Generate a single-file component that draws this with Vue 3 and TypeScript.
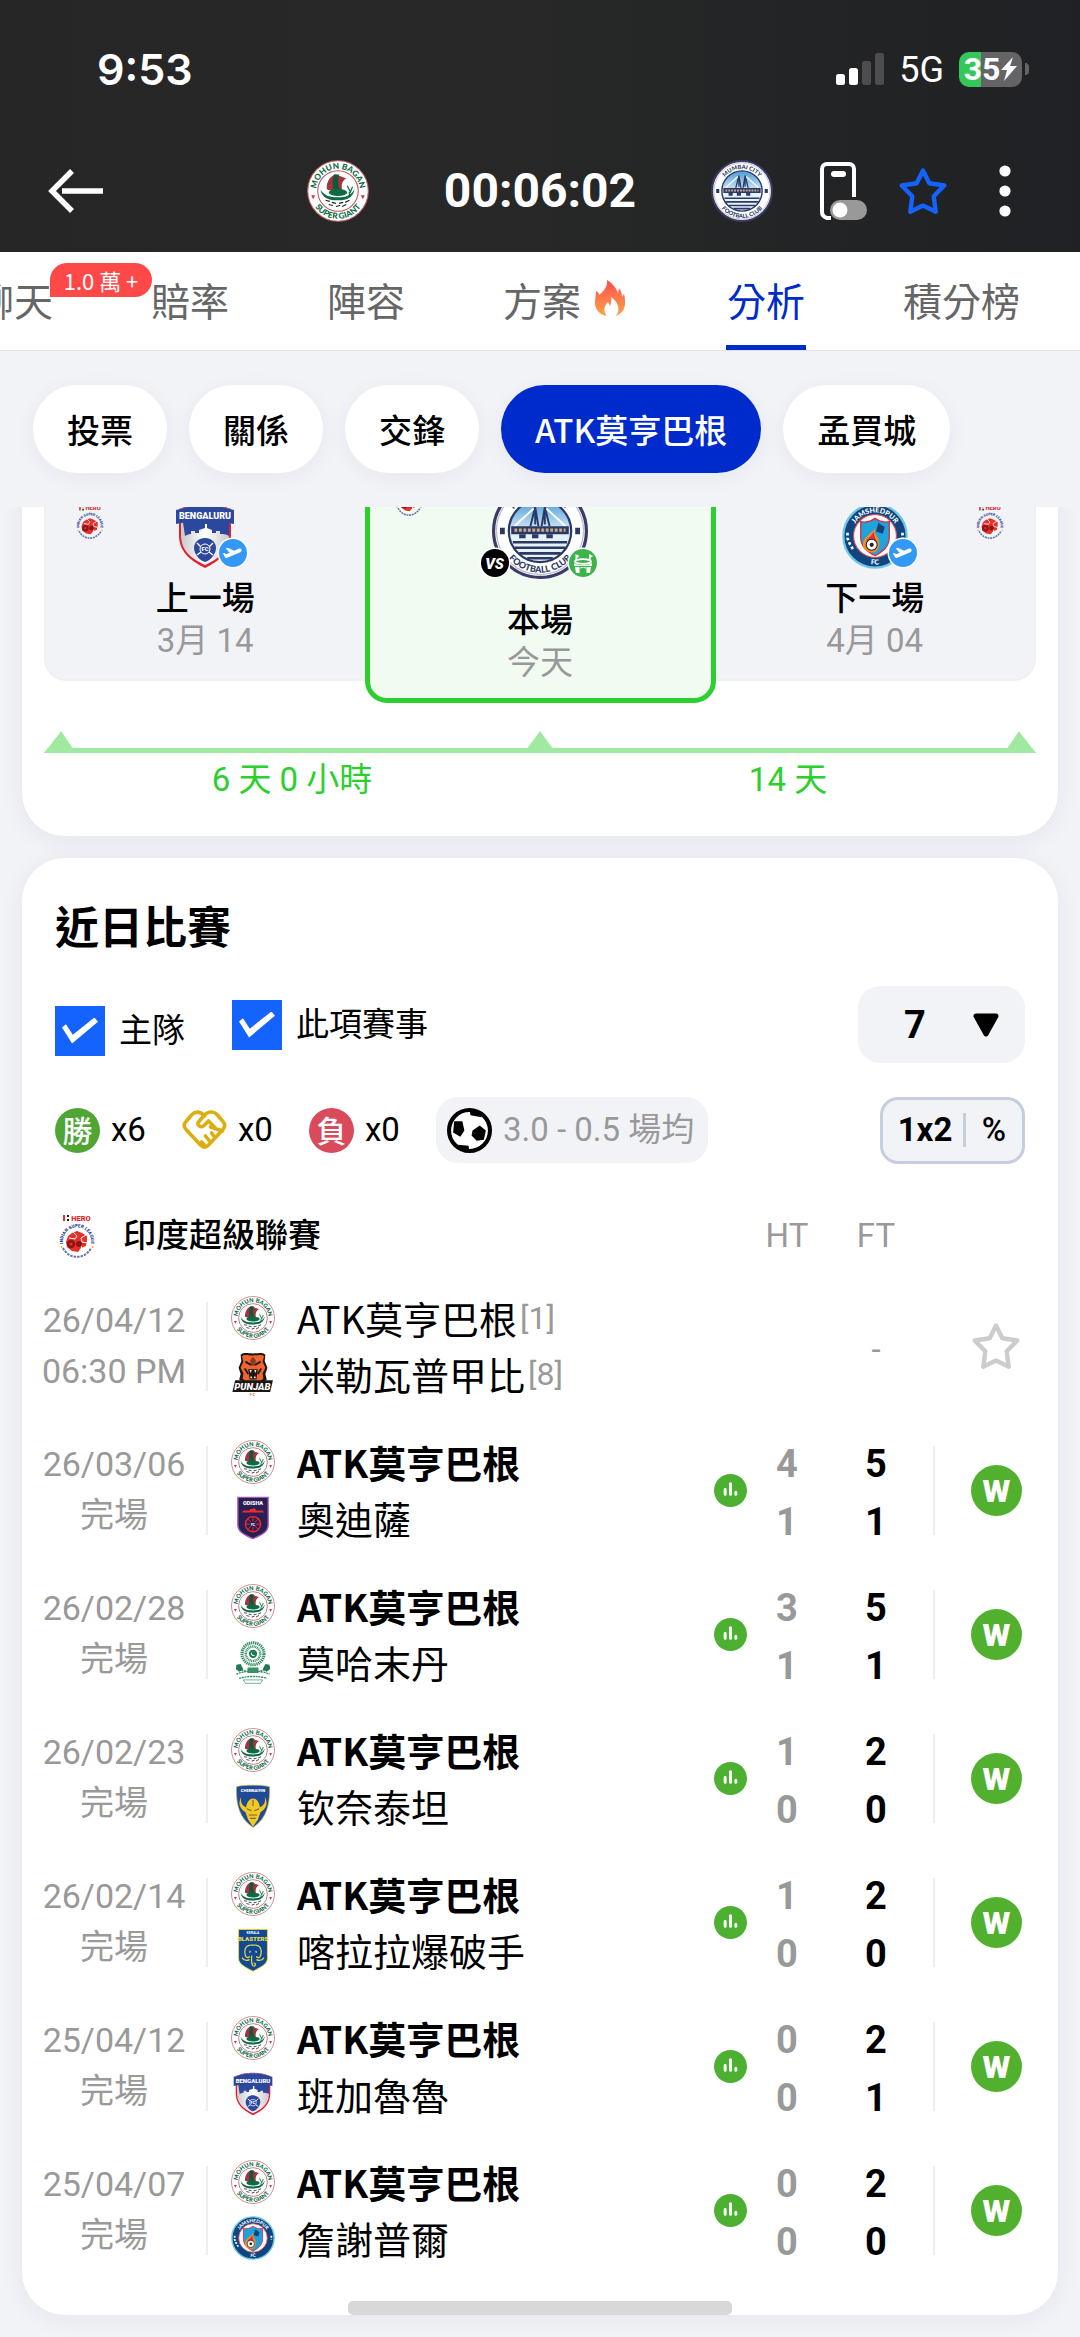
<script setup lang="ts">
import { ref } from 'vue'

interface Team {
  name: string
  logo: string
  rank?: number
}

interface Match {
  date: string
  status: string
  home: Team
  away: Team
  ht?: [number, number]
  ft?: [number, number]
}

interface Crest {
  box: string
  art: string
}

const chips = ['投票', '關係', '交鋒', 'ATK莫亨巴根', '孟買城']
const activeChip = ref('ATK莫亨巴根')
const homeOnly = ref(true)
const sameLeague = ref(true)
const count = ref('7')

const atk: Team = { name: 'ATK莫亨巴根', logo: 'mohun' }

const matches: Match[] = [
  {
    date: '26/04/12',
    status: '06:30 PM',
    home: { ...atk, rank: 1 },
    away: { name: '米勒瓦普甲比', logo: 'punjab', rank: 8 },
  },
  { date: '26/03/06', status: '完場', home: atk, away: { name: '奧迪薩', logo: 'odisha' }, ht: [4, 1], ft: [5, 1] },
  { date: '26/02/28', status: '完場', home: atk, away: { name: '莫哈末丹', logo: 'mohammedan' }, ht: [3, 1], ft: [5, 1] },
  { date: '26/02/23', status: '完場', home: atk, away: { name: '钦奈泰坦', logo: 'chennaiyin' }, ht: [1, 0], ft: [2, 0] },
  { date: '26/02/14', status: '完場', home: atk, away: { name: '喀拉拉爆破手', logo: 'kerala' }, ht: [1, 0], ft: [2, 0] },
  { date: '25/04/12', status: '完場', home: atk, away: { name: '班加魯魯', logo: 'bengaluru' }, ht: [0, 0], ft: [2, 1] },
  { date: '25/04/07', status: '完場', home: atk, away: { name: '詹謝普爾', logo: 'jamshedpur' }, ht: [0, 0], ft: [2, 0] },
]

/* Club and league crests, keyed by logo name */
const crests: Record<string, Crest> = {
  mohun: {
    box: '0 0 60 60',
    art: `
      <circle cx="30" cy="30" r="29.3" fill="#fff" stroke="#c0646a" stroke-width="1" />
      <circle cx="30" cy="30" r="19.6" fill="#fff" stroke="#b8505a" stroke-width="1" />
      <g fill="#0b6b45" font-family="Lato, sans-serif" font-weight="900" font-size="8" text-anchor="middle">
        <text><textPath href="#arcTop" startOffset="50%">MOHUN BAGAN</textPath></text>
        <text><textPath href="#arcBottom" startOffset="50%">SUPER GIANT</textPath></text>
      </g>
      <path d="M4 34h4l-2 4zM52 34h4l-2 4z" fill="#c73a5e" />
      <path d="M19 28c0-8 4-13 9-14l10 4c-4 2-5 6-4 11l-10 1-3-1z" fill="#a3333c" />
      <path d="M26 14h5c-1 5-2 10 1 15l-6 1c-2-6-1-11 0-16z" fill="#0b5b3b" />
      <path d="M13 29c5 6 9 7 17 7s12-1 16-8c-1 8-7 11-16 11s-15-2-17-10z" fill="#0b6b45" />
      <ellipse cx="30" cy="31.5" rx="9" ry="3.4" fill="#0b6b45" />
      <path d="M39 25l3 6 2-5M41 31v4" stroke="#0b6b45" stroke-width="1.2" fill="none" />
      <path d="M18 39l4 1M24 41l4 1M31 42l4-1M37 41l4-2M21 43l4 1M28 45l4-1M34 45l4-2" stroke="#222" stroke-width="1.1" />`,
  },
  mumbai: {
    box: '0 0 60 60',
    art: `
      <circle cx="30" cy="30" r="29" fill="#fff" stroke="#3d3a66" stroke-width="2" />
      <circle cx="30" cy="30" r="27.2" fill="none" stroke="#b9bfd3" stroke-width="0.8" />
      <g fill="#2c3963" font-family="Lato, sans-serif" font-weight="900" font-size="5.6" text-anchor="middle">
        <text><textPath href="#arcTop" startOffset="50%">MUMBAI CITY</textPath></text>
        <text><textPath href="#arcBottomTight" startOffset="50%">FOOTBALL CLUB</textPath></text>
      </g>
      <path d="M5 28h3v4H5zM52 28h3v4h-3z" fill="#2c3963" />
      <circle cx="30" cy="30" r="19.5" fill="url(#skyFill)" stroke="#2c3963" stroke-width="1.4" />
      <path d="M27 15l-3 12M27 15l2 12M33 15l-2 12M33 15l3 12M27 15v11M33 15v11" stroke="#2c3963" stroke-width="1.2" />
      <path d="M26 16L14 27M34 16l12 11" stroke="#fff" stroke-width="1.2" />
      <path d="M12 27h36v5H12z" fill="#2c3963" />
      <path d="M14 29.5h32" stroke="#c8a98c" stroke-width="2" stroke-dasharray="1.8 1" />
      <path d="M17 32h4v2.5h-4zM25 32h4v2.5h-4zM34 32h4v2.5h-4z" fill="#2c3963" />
      <path d="M13 37h34M14 40.5h32M17 44h26M22 47h16" stroke="#2c3963" stroke-width="1.6" />`,
  },
  bengaluru: {
    box: '0 0 60 66',
    art: `
      <path d="M4 6C14 2 20 1 30 1s16 1 26 5v26c0 16-10 25-26 33C14 57 4 48 4 32z" fill="#e2202d" />
      <path d="M6 6c9-3 14-4 24-4s15 1 24 4v26c0 15-9 23-24 30C15 55 6 47 6 32z" fill="url(#silverFill)" />
      <path d="M6 6c9-3 14-4 24-4s15 1 24 4v27c-3-2-6-2-9-2v-3h-4v2h-4v-3l-5-2v-4h-2v4l-6 2v3h-4v-2h-4v3c-3 0-4 1-6 2z" fill="#2b479e" />
      <path d="M1 7c18-4 40-4 58 0v14c-18-4-40-4-58 0z" fill="#2b479e" />
      <path d="M30 35c6 0 11 4 11 10s-6 13-11 14c-5-1-11-8-11-14s5-10 11-10z" fill="#2b479e" />
      <path d="M22 40l4 4M38 40l-4 4M22 52l4-3M38 52l-4-3" stroke="#fff" stroke-width="1.4" />
      <circle cx="30" cy="46" r="5" fill="#2b479e" stroke="#fff" stroke-width="1" />
      <g fill="#fff" font-family="Roboto, sans-serif" font-weight="900" text-anchor="middle">
        <text x="30" y="16" font-size="9">BENGALURU</text>
        <text x="30" y="48" font-size="6">FC</text>
      </g>`,
  },
  jamshedpur: {
    box: '0 0 60 60',
    art: `
      <circle cx="30" cy="30" r="28.8" fill="#10457f" stroke="#6cc7ea" stroke-width="2" />
      <circle cx="30" cy="30" r="19.5" fill="#f6f7fa" stroke="#d8505a" stroke-width="1" />
      <path d="M17 17c5 1 9 0 13-3 4 3 8 4 13 3v14c0 9-6 13-13 17-7-4-13-8-13-17z" fill="#1da4dd" stroke="#d8303d" stroke-width="1.2" />
      <path d="M33 18l6 4-2 6-6-2z" fill="#173f7a" />
      <path d="M19 38c0-6 6-9 11-15-1 6 4 8 4 14 0 5-3 8-7 8s-8-3-8-7z" fill="#f28c28" />
      <path d="M22 34c2-2 5-4 7-8 0 4 1 5 2 8z" fill="#d8303d" />
      <circle cx="27" cy="38" r="5" fill="#fff" stroke="#222" stroke-width="1" />
      <circle cx="27" cy="38" r="1.9" fill="#222" />
      <g fill="#fff" font-family="Lato, sans-serif" font-weight="900" font-size="6.4" text-anchor="middle">
        <text><textPath href="#arcTop" startOffset="50%">JAMSHEDPUR</textPath></text>
        <text><textPath href="#arcBottomTight" startOffset="50%">FC</textPath></text>
      </g>
      <path d="M5 27v5l2 5 3 5M55 27v5" fill="none" stroke="#fff" stroke-width="2.4" stroke-dasharray="2.5 2" />`,
  },
  punjab: {
    box: '0 0 60 64',
    art: `
      <path d="M12 4c5-4 10-2 18-2s13-2 18 2l-1 9 4 10-3 9 2 8-10 8H20l-10-8 2-8-3-9 4-10z" fill="#1c1715" />
      <path d="M14 6c4-3 8-1 16-1s12-2 16 1l-2 8 4 9-4 8 1 8-7 5-8 3-8-3-7-5 1-8-4-8 4-9z" fill="#f0642d" />
      <path d="M19 14l8 5M41 14l-8 5M18 24l5 8M42 24l-5 8" stroke="#1c1715" stroke-width="2.6" />
      <path d="M26 12l4-5 4 5-1 8h-6z" fill="#1c1715" opacity="0.5" />
      <path d="M23 25h14l-2 15H25z" fill="#1c1715" />
      <path d="M25 26l2 5 1-5zM32 26l1 5 2-5zM26 38l1-4 2 4zM31 38l2-4 1 4z" fill="#fff" />
      <path d="M4 41h55l-4 17H0z" fill="#1c1715" />
      <text x="29" y="55" fill="#fff" font-family="Roboto, sans-serif" font-weight="900" font-style="italic" font-size="14" text-anchor="middle">PUNJAB</text>
      <text x="29" y="64" fill="#f0642d" font-family="Roboto, sans-serif" font-weight="700" font-size="5" text-anchor="middle">F C</text>`,
  },
  odisha: {
    box: '0 0 60 64',
    art: `
      <path d="M8 2h44v40c0 10-10 15-22 20C18 57 8 52 8 42z" fill="#2a1f55" stroke="#a456b4" stroke-width="2" />
      <text x="30" y="13" fill="#fff" font-family="Roboto, sans-serif" font-weight="900" font-size="8" text-anchor="middle">ODISHA</text>
      <path d="M14 24l2-3h9l1-2h4l1-2 2 2 2 2h9l2 3z" fill="#f0282c" />
      <g fill="none" stroke="#f0282c" stroke-width="2">
        <circle cx="30" cy="41" r="11" />
        <path d="M30 30v22M19 41h22M22.200 33.200l15.600 15.600M37.800 33.200L22.200 48.800" stroke-width="1.300" />
      </g>
      <circle cx="30" cy="41" r="4" fill="#2a1f55" />
      <text x="30" y="43" fill="#fff" font-family="Roboto, sans-serif" font-weight="700" font-size="5" text-anchor="middle">FC</text>`,
  },
  mohammedan: {
    box: '0 0 60 64',
    art: `
      <g fill="none" stroke="#3b8f68">
        <circle cx="30" cy="20" r="16" stroke-width="4.500" stroke-dasharray="2 1" />
        <circle cx="30" cy="20" r="10.500" stroke-width="3.500" stroke-dasharray="1.500 1" />
        <path d="M7 38c4 6 12 8 23 8s19-2 23-8M6 50c8-6 40-6 48 0M10 56c10-4 30-4 40 0" stroke-width="2" stroke-dasharray="3 1" />
        <path d="M16 58h28l-3 5H19z" stroke-width="1" />
      </g>
      <circle cx="30" cy="20" r="6" fill="#1f7a50" />
      <path d="M28 17a3.500 3.500 0 1 0 5 5 4 4 0 0 1-5-5z" fill="#fff" />
      <path d="M6 36l6-1 4 8-6 3-5-4zM54 36l-6-1-4 8 6 3 5-4z" fill="#1f7a50" />
      <path d="M22 40h16v8H22z" fill="#3b8f68" />`,
  },
  chennaiyin: {
    box: '0 0 60 64',
    art: `
      <path d="M6 4c8-3 40-3 48 0 1 22-3 46-24 59C9 50 5 26 6 4z" fill="#1f4b96" stroke="#c9b04a" stroke-width="1" />
      <text x="30" y="12" fill="#fff" font-family="Roboto, sans-serif" font-weight="900" font-size="6" text-anchor="middle">CHENNAIYIN</text>
      <path d="M13 19c-2 8 2 13 7 15 1-8 5-13 10-13s9 5 10 13c5-2 9-7 7-15 6 10 1 18-6 22l-4 11-7 10-7-10-4-11c-7-4-12-12-6-22z" fill="#f0c929" />
      <path d="M21 36l7 3M39 36l-7 3M24 45h12M26 50h8M30 23v9" stroke="#7d6414" stroke-width="1.600" />`,
  },
  kerala: {
    box: '0 0 60 64',
    art: `
      <path d="M9 2h42v42c0 9-10 13-21 19C19 57 9 53 9 44z" fill="#10489a" stroke="#e8d92f" stroke-width="1.400" />
      <text x="30" y="8" fill="#fff" font-family="Roboto, sans-serif" font-weight="700" font-size="5" text-anchor="middle">KERALA</text>
      <text x="30" y="19" fill="#f0e034" font-family="Roboto, sans-serif" font-weight="900" font-size="9" text-anchor="middle">BLASTERS</text>
      <g fill="none" stroke="#e8d92f" stroke-width="1.800">
        <path d="M26 25c-8 1-9 9-7 15 1 4 5 4 6 1M34 25c8 1 9 9 7 15-1 4-5 4-6 1" />
        <path d="M26 25h8M28 40c0 8-1 12 2 15 4 2 5-4 1-4M14 43c3 5 7 5 11 3M46 43c-3 5-7 5-11 3M26 33l-1 3M34 33l1 3" />
      </g>`,
  },
  isl: {
    box: '0 0 36 44',
    art: `
      <path d="M4 1h2v6H4z" fill="#e22c2c" />
      <path d="M8 1h2v2H8zM8 5h2v2H8z" fill="#222" />
      <text x="22" y="7" fill="#e22c2c" font-family="Roboto, sans-serif" font-weight="900" font-size="7.500" text-anchor="middle">HERO</text>
      <text fill="#27408f" font-family="Roboto, sans-serif" font-weight="900" font-size="4.500" text-anchor="middle">
        <textPath href="#arcLeague" startOffset="50%">INDIAN SUPER LEAGUE</textPath>
      </text>
      <path d="M4 34a15.500 15.500 0 0 0 28 0" fill="none" stroke="#6373b3" stroke-width="2" stroke-dasharray="2.500 1" />
      <circle cx="2.500" cy="33" r="1" fill="#f2b53a" />
      <circle cx="33.500" cy="33" r="1" fill="#f2b53a" />
      <path d="M13 19l5-2 5 2 5 3v5l-1 5-5 2-3 4-6-1-5-4-1-5 2-6z" fill="#e5302b" />
      <path d="M14 18l4 4-2 3-6-1M27 21l-5 3 1 4 6 1M22 31l1 6" stroke="#fff" stroke-width="1" fill="none" />
      <circle cx="12" cy="30" r="4.200" fill="#8e1714" />
      <circle cx="20" cy="30" r="3" fill="#8e1714" />
      <circle cx="12" cy="30" r="1.500" fill="#e5302b" />`,
  },
}
</script>

<template>
  <div class="page">
    <!-- Shared gradients, text arcs and glyphs -->
    <svg class="defs" aria-hidden="true">
      <defs>
        <linearGradient id="flameFill" x1="0" y1="0" x2="0" y2="1">
          <stop offset="0" stop-color="#ff4b4b" />
          <stop offset="1" stop-color="#ffa54a" />
        </linearGradient>
        <linearGradient id="skyFill" x1="0" y1="0" x2="0" y2="1">
          <stop offset="0" stop-color="#4a9bd6" />
          <stop offset="0.55" stop-color="#e6f2fa" />
        </linearGradient>
        <linearGradient id="silverFill" x1="0" y1="0" x2="1" y2="0">
          <stop offset="0" stop-color="#c9c9cc" />
          <stop offset="0.5" stop-color="#ffffff" />
          <stop offset="1" stop-color="#c9c9cc" />
        </linearGradient>
        <path id="arcTop" d="M10 36A21 21 0 1 1 50 36" />
        <path id="arcBottom" d="M3 30a27 27 0 0 0 54 0" />
        <path id="arcBottomTight" d="M4 30a26 26 0 0 0 52 0" />
        <path id="arcLeague" d="M4.500 31A14 14 0 1 1 31.500 31" />
      </defs>

      <symbol id="star" viewBox="0 0 48 48">
        <path
          d="M24 3.500l6.300 12.800 15 2.200-10.600 10.700 2 15.500L24 38.600l-12.700 6.100 2-15.500L2.700 18.500l15-2.200z"
          fill="none"
          stroke="currentColor"
          stroke-width="4.400"
          stroke-linejoin="round"
        />
      </symbol>

      <symbol id="plane" viewBox="0 0 32 32">
        <circle cx="16" cy="16" r="15.500" fill="#fff" />
        <circle cx="16" cy="16" r="14" fill="#3399f8" />
        <path
          d="M24.500 12.500c-.4-1-1.400-1.300-2.300-.9L17 13.800l-6.300-3.100-1.900.8 3.900 4.300-3.500 1.400-2-1.100-1.300.5 2.300 4c.3.500.9.700 1.500.5l13.600-5.900c1-.4 1.600-1.700 1.200-2.700z"
          fill="#fff"
        />
      </symbol>
    </svg>

    <header class="top">
      <div class="status">
        <span class="clock">9:53</span>
        <div class="status-right">
          <svg class="signal" viewBox="0 0 48 32" aria-hidden="true">
            <rect x="0" y="21" width="9" height="11" rx="2.500" fill="#fff" />
            <rect x="13" y="15" width="9" height="17" rx="2.500" fill="#fff" />
            <rect x="26" y="8" width="9" height="24" rx="2.500" fill="#4d4d50" />
            <rect x="39" y="0" width="9" height="32" rx="2.500" fill="#4d4d50" />
          </svg>
          <span class="net">5G</span>
          <span class="battery">
            <span>35</span>
            <svg class="bolt" viewBox="0 0 16 24" aria-hidden="true">
              <path d="M12 0L0 13h6l-3 11L16 9H9z" fill="#fff" />
            </svg>
          </span>
          <span class="nub"></span>
        </div>
      </div>
      <div class="bar">
        <button class="icon back" aria-label="返回">
          <svg viewBox="0 0 56 44"><path d="M24 2L4 22l20 20M14 22h41" fill="none" stroke="#fff" stroke-width="5.500" /></svg>
        </button>
        <div class="score">
          <svg class="club" :viewBox="crests.mohun.box" v-html="crests.mohun.art"></svg>
          <span class="timer">00:06:02</span>
          <svg class="club" :viewBox="crests.mumbai.box" v-html="crests.mumbai.art"></svg>
        </div>
        <div class="actions">
          <button class="icon phone" aria-label="懸浮視窗">
            <svg viewBox="0 0 48 58">
              <path d="M34 35V7c0-3-2-5-5-5H7C4 2 2 4 2 7v43c0 3 2 5 5 6h4" fill="none" stroke="#fff" stroke-width="4" />
              <rect x="11" y="9" width="15" height="6" rx="3" fill="#fff" />
              <rect x="10" y="38" width="37" height="20" rx="10" fill="#999" />
              <circle cx="20" cy="48" r="7.500" fill="#fff" />
            </svg>
          </button>
          <button class="icon fav" aria-label="收藏"><svg><use href="#star" /></svg></button>
          <button class="icon more" aria-label="更多">
            <svg viewBox="0 0 12 52">
              <circle cx="6" cy="6" r="5.600" fill="#fff" />
              <circle cx="6" cy="26" r="5.600" fill="#fff" />
              <circle cx="6" cy="46" r="5.600" fill="#fff" />
            </svg>
          </button>
        </div>
      </div>
    </header>

    <nav class="tabs">
      <a href="#chat">聊天<span class="badge">1.0 萬 +</span></a>
      <a href="#odds">賠率</a>
      <a href="#lineup">陣容</a>
      <a href="#tips">
        方案
        <svg class="flame" viewBox="0 0 30 36" aria-hidden="true">
          <path
            d="M12 36C5 35 0 30 0 23c0-5 1-8 1-12 2 1 3 2 3 4 4-3 9-8 8-15 5 3 10 8 11 14l1-6c2 3 3 6 3 9l2-3c1 3 1 6 1 9 0 7-4 11-9 13 2-3 3-6 2-10-1-4-4-7-7-9 1 4 0 6-1 9l-2-4c-4 4-5 9-1 14z"
            fill="url(#flameFill)"
          />
        </svg>
      </a>
      <a href="#analysis" class="on" aria-current="page">分析</a>
      <a href="#table">積分榜</a>
    </nav>

    <div class="chips">
      <button v-for="c in chips" :key="c" :class="{ on: c === activeChip }" @click="activeChip = c">{{ c }}</button>
    </div>

    <main class="scroll">
      <section class="card fixtures">
        <div class="trio">
          <div class="cell prev">
            <svg class="league-mark" :viewBox="crests.isl.box" v-html="crests.isl.art"></svg>
            <div class="crest">
              <svg :viewBox="crests.bengaluru.box" v-html="crests.bengaluru.art"></svg>
              <svg class="tag end"><use href="#plane" /></svg>
            </div>
            <strong>上一場</strong>
            <span>3月 14</span>
          </div>
          <div class="cell now">
            <svg class="league-mark" :viewBox="crests.isl.box" v-html="crests.isl.art"></svg>
            <div class="crest">
              <svg :viewBox="crests.mumbai.box" v-html="crests.mumbai.art"></svg>
              <svg class="tag start" viewBox="0 0 32 32">
                <circle cx="16" cy="16" r="15.500" fill="#fff" />
                <circle cx="16" cy="16" r="14" fill="#000" />
                <text x="15.500" y="21.500" fill="#fff" font-family="Roboto, sans-serif" font-weight="900" font-style="italic" font-size="15" text-anchor="middle">VS</text>
              </svg>
              <svg class="tag end" viewBox="0 0 32 32">
                <circle cx="16" cy="16" r="15.500" fill="#fff" />
                <circle cx="16" cy="16" r="14" fill="#3bb54a" />
                <path d="M8.500 7l4 2-2.500 2v3H8.500zM22 7l4 2-2.500 2v3H22z" fill="#fff" />
                <ellipse cx="16" cy="14.500" rx="8" ry="2.300" fill="none" stroke="#fff" stroke-width="1.800" />
                <path d="M7 16c4 3 14 3 18 0v3H7zM8 20h4.500v6H9zM19.500 20H24l-1 6h-3.500zM13.500 20h5v3a2.500 2.500 0 0 0-5 0z" fill="#fff" />
              </svg>
            </div>
            <strong>本場</strong>
            <span>今天</span>
          </div>
          <div class="cell next">
            <svg class="league-mark" :viewBox="crests.isl.box" v-html="crests.isl.art"></svg>
            <div class="crest">
              <svg :viewBox="crests.jamshedpur.box" v-html="crests.jamshedpur.art"></svg>
              <svg class="tag end"><use href="#plane" /></svg>
            </div>
            <strong>下一場</strong>
            <span>4月 04</span>
          </div>
        </div>
        <div class="track" aria-hidden="true">
          <svg viewBox="0 0 32 22"><path d="M0 22L17 0l15 22z" fill="#9fe9a0" /></svg>
          <svg viewBox="0 0 32 22"><path d="M0 22L16 0l16 22z" fill="#9fe9a0" /></svg>
          <svg viewBox="0 0 32 22"><path d="M0 22L15 0l17 22z" fill="#9fe9a0" /></svg>
        </div>
        <div class="spans">
          <span>6 天 0 小時</span>
          <span>14 天</span>
        </div>
      </section>

      <section class="card recent">
        <h2>近日比賽</h2>
        <div class="filters">
          <label class="check low"><input v-model="homeOnly" type="checkbox" />主隊</label>
          <label class="check"><input v-model="sameLeague" type="checkbox" />此項賽事</label>
          <div class="picker">
            <select v-model="count" aria-label="場次">
              <option>7</option>
              <option>10</option>
              <option>20</option>
            </select>
            <svg viewBox="0 0 26 24" aria-hidden="true">
              <path d="M3 3h20L13 21z" stroke="#000" stroke-width="5" stroke-linejoin="round" />
            </svg>
          </div>
        </div>

        <div class="stats">
          <div class="stat"><span class="dot win">勝</span>x6</div>
          <div class="stat">
            <svg class="shake" viewBox="0 0 44 40" aria-hidden="true">
              <g fill="none" stroke="#dcae10" stroke-width="3.600" stroke-linejoin="round" stroke-linecap="round">
                <path d="M22 6C18 1 13 1 9 5L4 11c-3 3-3 6 0 9l14 15c3 3 5 3 8 0l14-15c3-3 3-6 0-9l-5-6c-4-4-9-4-13 0l-6 7c-2 3 2 6 5 4l5-5 6 6" />
                <path d="M28 17l12 4M29 23l3 4M23 26l4 5M19 32l3 3" />
              </g>
            </svg>x0
          </div>
          <div class="stat"><span class="dot loss">負</span>x0</div>
          <div class="average">
            <svg class="ball" viewBox="0 0 44 44" aria-hidden="true">
              <circle cx="22" cy="22" r="20" fill="#fff" stroke="#000" stroke-width="4" />
              <path d="M7 13h8l2 9-4 6-7-4zM32 17l6 5-2 9-7 1-5-5 1-5zM22 2l9 2 3 5-11-2zM11 36l10 1 1 5-8-1z" />
            </svg>
            3.0 - 0.5 場均
          </div>
          <div class="toggle" role="group" aria-label="顯示方式">
            <button>1x2</button>
            <button>%</button>
          </div>
        </div>

        <table>
          <colgroup>
            <col class="c-date" />
            <col />
            <col class="c-icon" />
            <col class="c-ht" />
            <col class="c-ft" />
            <col class="c-result" />
          </colgroup>
          <thead>
            <tr>
              <th colspan="3" class="league">
                <div><svg :viewBox="crests.isl.box" v-html="crests.isl.art"></svg>印度超級聯賽</div>
              </th>
              <th class="num">HT</th>
              <th class="num ft">FT</th>
              <td></td>
            </tr>
          </thead>
          <tbody>
            <tr v-for="m in matches" :key="m.date">
              <td>
                <div class="date"><span>{{ m.date }}</span><span>{{ m.status }}</span></div>
              </td>
              <td class="teams">
                <div :class="{ winner: m.ft }">
                  <svg :viewBox="crests[m.home.logo].box" v-html="crests[m.home.logo].art"></svg>
                  {{ m.home.name }}<small v-if="m.home.rank">[{{ m.home.rank }}]</small>
                </div>
                <div>
                  <svg :viewBox="crests[m.away.logo].box" v-html="crests[m.away.logo].art"></svg>
                  {{ m.away.name }}<small v-if="m.away.rank">[{{ m.away.rank }}]</small>
                </div>
              </td>
              <td>
                <svg v-if="m.ft" class="chart" viewBox="0 0 34 34" aria-hidden="true">
                  <circle cx="17" cy="17" r="17" fill="#4db031" />
                  <path d="M11.500 16v5M17 10v11M22.500 19v2" stroke="#fff" stroke-width="3" stroke-linecap="round" />
                </svg>
              </td>
              <td class="goals half">
                <template v-if="m.ht"><div>{{ m.ht[0] }}</div><div>{{ m.ht[1] }}</div></template>
              </td>
              <td class="goals ft">
                <template v-if="m.ft"><div>{{ m.ft[0] }}</div><div>{{ m.ft[1] }}</div></template>
                <span v-else class="dash">-</span>
              </td>
              <td>
                <div class="result" :class="{ line: m.ft }">
                  <span v-if="m.ft" class="w">W</span>
                  <button v-else class="icon follow" aria-label="收藏"><svg><use href="#star" /></svg></button>
                </div>
              </td>
            </tr>
          </tbody>
        </table>
      </section>
    </main>
    <div class="home-bar"></div>
  </div>
</template>

<style>
body {
  margin: 0;
  background: #f2f3f7;
}
</style>

<style scoped>
.page {
  position: relative;
  overflow: hidden;
  background: #f2f3f7;
  color: #000;
  font-family: Roboto, 'Noto Sans CJK TC', sans-serif;
  font-size: 33px;
  line-height: 44px;
}
.page *,
.page *::before {
  box-sizing: border-box;
}
.page svg {
  display: block;
  flex: none;
}
.page svg.defs {
  position: absolute;
  width: 0;
  height: 0;
}
button {
  margin: 0;
  padding: 0;
  border: 0;
  background: none;
  color: inherit;
  font: inherit;
}
.icon svg {
  width: 100%;
  height: 100%;
}

/* Header */
.top {
  height: 252px;
  background: linear-gradient(90deg, #262626, #272827 45%, #202124);
  color: #fff;
}
.status {
  display: flex;
  justify-content: space-between;
  align-items: center;
  height: 138px;
  padding: 0 51px 0 97px;
}
.clock {
  font: 600 43px/50px Inter, sans-serif;
}
.status-right {
  display: flex;
  align-items: center;
}
.signal {
  width: 48px;
  height: 32px;
}
.net {
  margin: 2px 15px 0;
  font-size: 36px;
  line-height: 40px;
}
.battery {
  display: flex;
  align-items: center;
  justify-content: center;
  gap: 1px;
  width: 63px;
  height: 35px;
  border-radius: 10px;
  background: linear-gradient(90deg, #34c759 22px, #646466 22px);
  font-size: 32px;
  font-weight: 700;
  line-height: 36px;
}
.bolt {
  width: 16px;
  height: 24px;
}
.nub {
  width: 4px;
  height: 12px;
  margin-left: 3px;
  border-radius: 0 4px 4px 0;
  background: #646466;
}
.bar {
  display: grid;
  grid-template-columns: 307px 1fr 307px;
  align-items: center;
  height: 106px;
}
.back {
  width: 56px;
  height: 44px;
  margin-left: 48px;
}
.score {
  display: flex;
  justify-content: space-between;
  align-items: center;
}
.club {
  width: 62px;
  height: 62px;
}
.timer {
  font-size: 48px;
  font-weight: 700;
  line-height: 60px;
}
.actions {
  display: flex;
  align-items: center;
  justify-content: flex-end;
  padding-right: 69px;
}
.phone {
  width: 48px;
  height: 58px;
}
.fav {
  width: 48px;
  height: 48px;
  margin: 0 52px 0 31px;
  color: #1463ff;
}
.more {
  width: 12px;
  height: 52px;
}

/* Tabs */
.tabs {
  display: flex;
  gap: 96px;
  height: 99px;
  overflow: hidden;
  border-bottom: 1px solid #e2e3e7;
  background: #fff;
}
.tabs a {
  position: relative;
  display: flex;
  align-items: center;
  gap: 14px;
  flex: none;
  padding: 4px 1px 0;
  color: #666;
  font-size: 39px;
  line-height: 56px;
  text-decoration: none;
}
.tabs a:first-child {
  margin-left: -26px;
}
.tabs .on {
  color: #002bcc;
}
.tabs .on::after {
  content: '';
  position: absolute;
  right: 0;
  bottom: 0;
  left: 0;
  height: 5px;
  background: #002bcc;
}
.badge {
  position: absolute;
  top: 11px;
  left: 76px;
  width: 102px;
  border-radius: 17px 17px 17px 0;
  background: #ff4848;
  color: #fff;
  font: 22px/34px 'Noto Sans CJK TC', sans-serif;
  text-align: center;
  white-space: nowrap;
}
.flame {
  width: 30px;
  height: 36px;
  margin: 0 4px 10px 0;
}

/* Section chips */
.chips {
  display: flex;
  gap: 22px;
  padding: 34px 33px;
}
.chips button {
  flex: none;
  padding: 0 34px;
  border-radius: 44px;
  background: #fff;
  box-shadow: 0 4px 22px rgba(30, 40, 90, 0.05);
  font-family: 'Noto Sans CJK TC', sans-serif;
  font-weight: 500;
  line-height: 88px;
}
.chips .on {
  background: #002bcc;
  color: #fff;
}

/* Cards */
.scroll {
  display: flex;
  flex-direction: column;
  gap: 22px;
  overflow: hidden;
  padding: 0 22px 22px;
}
.card {
  border-radius: 43px;
  background: #fff;
  box-shadow: 0 4px 26px rgba(30, 40, 90, 0.06);
}
.fixtures {
  margin-top: -48px;
  padding: 0 22px 35px;
}
.trio {
  display: grid;
  grid-template-columns: 1fr 351px 1fr;
  align-items: start;
}
.cell {
  position: relative;
  display: flex;
  flex-direction: column;
  align-items: center;
  border: 2px solid #f0f0f1;
  background: #f2f3f7;
  line-height: 42px;
}
.cell strong {
  font-weight: 500;
}
.cell span {
  color: #999;
}
.prev {
  padding: 42px 0 17px;
  border-right: 0;
  border-radius: 0 0 0 22px;
}
.next {
  padding: 42px 0 17px;
  border-left: 0;
  border-radius: 0 0 22px 0;
}
.now {
  padding: 19px 0 14px;
  border: 5px solid #2bd02f;
  border-radius: 22px;
  background: #f1fbf2;
}
.crest {
  position: relative;
  width: 66px;
  height: 66px;
  margin-bottom: 9px;
}
.crest > svg:first-child {
  width: 100%;
  height: 100%;
}
.now .crest {
  width: 96px;
  height: 96px;
  margin-bottom: 21px;
}
.tag {
  position: absolute;
  bottom: 0;
  width: 32px;
  height: 32px;
}
.tag.end {
  right: -11px;
}
.tag.start {
  left: -13px;
}
.league-mark {
  position: absolute;
  top: 44px;
  left: 30px;
  width: 28px;
  height: 34px;
}
.now .league-mark {
  top: 18px;
  left: 25px;
}
.next .league-mark {
  right: 30px;
  left: auto;
}
.track {
  display: flex;
  justify-content: space-between;
  margin-top: 28px;
  background: linear-gradient(#9fe9a0, #9fe9a0) bottom / 100% 5px no-repeat;
  clip-path: polygon(0 100%, 17px 0, calc(100% - 17px) 0, 100% 100%);
}
.track svg {
  width: 32px;
  height: 22px;
}
.spans {
  display: grid;
  grid-template-columns: 1fr 1fr;
  margin-top: 6px;
  color: #2bd02f;
  line-height: 42px;
  text-align: center;
}

/* Recent matches */
.recent {
  padding: 41px 0 33px;
}
h2 {
  margin: 0 33px;
  font-size: 44px;
  font-weight: 700;
  line-height: 60px;
}
.filters {
  display: flex;
  align-items: center;
  gap: 47px;
  margin: 27px 33px 34px;
}
.check {
  display: flex;
  align-items: center;
  gap: 14px;
}
.check.low {
  padding-top: 12px;
}
.check input {
  appearance: none;
  display: grid;
  place-items: center;
  width: 50px;
  height: 50px;
  margin: 0;
  background: #1463ff;
}
.check input:checked::before {
  content: '';
  width: 36px;
  height: 26px;
  background: #fff;
  clip-path: polygon(0 38%, 11% 26%, 30% 66%, 90% 0, 100% 16%, 28% 100%);
}
.picker {
  position: relative;
  margin-left: auto;
}
.picker select {
  appearance: none;
  display: block;
  width: 167px;
  height: 77px;
  padding: 0 0 0 46px;
  border: 0;
  border-radius: 22px;
  background: #f2f3f7;
  color: #000;
  font: 700 38px Roboto, sans-serif;
}
.picker svg {
  position: absolute;
  top: 27px;
  right: 26px;
  width: 26px;
  height: 24px;
  pointer-events: none;
}
.stats {
  display: flex;
  align-items: center;
  height: 66px;
  margin: 0 33px 35px;
}
.stat {
  display: flex;
  align-items: center;
  gap: 11px;
  width: 127px;
}
.dot {
  width: 45px;
  height: 45px;
  border-radius: 50%;
  color: #fff;
  font: 500 30px/43px 'Noto Sans CJK TC', sans-serif;
  text-align: center;
}
.win {
  background: #4fa635;
}
.loss {
  background: #d94a5b;
}
.shake {
  width: 45px;
  height: 40px;
}
.average {
  display: flex;
  align-items: center;
  gap: 11px;
  height: 66px;
  padding: 0 14px 0 11px;
  border-radius: 22px;
  background: #f2f3f7;
  color: #999;
}
.ball {
  width: 45px;
  height: 45px;
}
.toggle {
  display: flex;
  align-items: center;
  width: 145px;
  height: 67px;
  margin-left: auto;
  border: 3px solid #c6cddd;
  border-radius: 18px;
  background: #f2f3f7;
}
.toggle button {
  flex: 1 1 0;
  line-height: 34px;
  font-weight: 500;
}
.toggle button:first-child {
  flex: 0 0 83px;
  padding-left: 4px;
  border-right: 3px solid #c6cddd;
  font-weight: 700;
}

table {
  width: 100%;
  table-layout: fixed;
  border-collapse: collapse;
}
th,
td {
  padding: 0;
  font-weight: 400;
}
.c-date {
  width: 186px;
}
.c-icon {
  width: 33px;
}
.c-ht {
  width: 80px;
}
.c-ft {
  width: 106px;
}
.c-result {
  width: 125px;
}
thead tr {
  height: 76px;
}
.league div {
  display: flex;
  align-items: center;
  gap: 28px;
  padding-left: 37px;
  font-weight: 500;
}
.league svg {
  width: 36px;
  height: 44px;
}
.num {
  color: #999;
}
.ft {
  padding-right: 8px;
}
tbody tr {
  height: 144px;
}
.date {
  display: flex;
  flex-direction: column;
  justify-content: center;
  height: 89px;
  border-right: 2px solid #eee;
  color: #999;
  font-size: 34px;
  line-height: 51px;
  text-align: center;
}
.teams {
  padding-left: 23px;
}
.teams div {
  display: flex;
  align-items: center;
  height: 56px;
  font: 38px/56px 'Noto Sans CJK TC', sans-serif;
  white-space: nowrap;
}
.teams .winner {
  font-weight: 700;
}
.teams svg {
  width: 44px;
  height: 44px;
  margin-right: 22px;
}
.teams small {
  margin-left: 3px;
  color: #999;
  font: 32px/56px Roboto, sans-serif;
}
.chart {
  width: 33px;
  height: 33px;
}
.goals {
  padding-top: 6px;
  font-size: 38px;
  font-weight: 700;
  line-height: 58px;
  text-align: center;
}
.half {
  color: #999;
}
.dash {
  color: #999;
  font-size: 33px;
  font-weight: 400;
}
.result {
  display: flex;
  align-items: center;
  justify-content: center;
  height: 89px;
}
.result.line {
  border-left: 2px solid #eee;
}
.w {
  width: 51px;
  height: 51px;
  border-radius: 50%;
  background: #52b02f;
  color: #fff;
  font-size: 32px;
  font-weight: 900;
  line-height: 53px;
  text-align: center;
}
.follow {
  width: 48px;
  height: 48px;
  color: #ccc;
}
.home-bar {
  position: absolute;
  bottom: 22px;
  left: 50%;
  width: 384px;
  height: 14px;
  margin-left: -192px;
  border-radius: 5px;
  background: #d8d8d8;
}
</style>
